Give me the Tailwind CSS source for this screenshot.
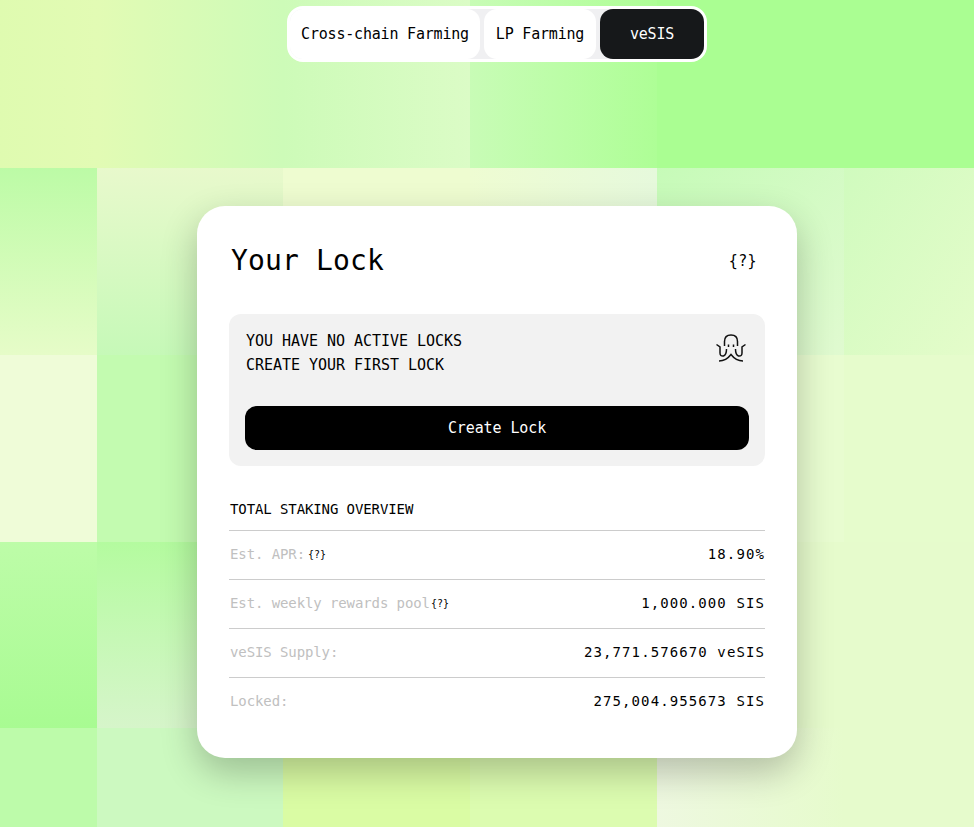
<!DOCTYPE html>
<html lang="en">
<head>
  <meta charset="UTF-8" />
  <title>Your Lock</title>
  <meta name="viewport" content="width=device-width, initial-scale=1.0" />
  <script src="https://cdn.jsdelivr.net/npm/@tailwindcss/browser@4"></script>
</head>
<body class="relative h-[827px] overflow-hidden bg-[#e6fbcc] font-['DejaVu_Sans_Mono',monospace] text-black">

  <!-- background mosaic -->
  <div class="absolute inset-0 grid grid-cols-[97px_186px_187px_187px_187px_130px] grid-rows-[168px_187px_187px_186px_99px]">
    <div class="bg-linear-to-r from-[#dffbb0] to-[#e2fbb4]"></div>
    <div class="bg-linear-to-r from-[#e2fbb4] to-[#cdfbb8]"></div>
    <div class="bg-linear-to-r from-[#cdfbb8] to-[#dbfcc6]"></div>
    <div class="bg-linear-to-r from-[#c8fcb6] to-[#aefe96]"></div>
    <div class="bg-[#aafe92]"></div>
    <div class="bg-[#aafe92]"></div>

    <div class="bg-linear-to-b from-[#bcfba6] to-[#e6fcc8]"></div>
    <div class="bg-linear-to-b from-[#e8f9cc] to-[#c6f9b8]"></div>
    <div class="bg-[#eefcd0]"></div>
    <div class="bg-linear-to-r from-[#eefcd2] to-[#e6f9dc]"></div>
    <div class="bg-linear-to-br from-[#c6fbb8] to-[#e0fad0]"></div>
    <div class="bg-linear-to-br from-[#d0fbbe] to-[#e4fcca]"></div>

    <div class="bg-[#effcd8]"></div>
    <div class="bg-[#c3fbb0]"></div>
    <div class="bg-[#e8f8d0]"></div>
    <div class="bg-[#e8f8d0]"></div>
    <div class="bg-[#e8fcd0]"></div>
    <div class="bg-[#e6fccc]"></div>

    <div class="bg-linear-to-b from-[#bdfca8] to-[#a8fb92]"></div>
    <div class="bg-linear-to-b from-[#b4fb9f] to-[#d6f5ca]"></div>
    <div class="bg-[#d0f5b0]"></div>
    <div class="bg-[#d0f5b0]"></div>
    <div class="bg-[#e6fbcc]"></div>
    <div class="bg-[#e6fbcc]"></div>

    <div class="bg-[#bdfbaa]"></div>
    <div class="bg-[#ccf9c0]"></div>
    <div class="bg-[#dafca4]"></div>
    <div class="bg-[#dcfcb0]"></div>
    <div class="bg-linear-to-r from-[#eef8e0] to-[#e6fbcc]"></div>
    <div class="bg-[#e6fbcc]"></div>
  </div>

  <main class="relative flex flex-col items-center pl-5">
    <!-- tabs -->
    <nav class="mt-[6px] flex h-14 gap-1 rounded-[16px] border-[3px] border-white bg-[#f0f0f2] text-[15px] tracking-[-0.2px]">
      <a class="flex w-[190px] items-center justify-center rounded-[13px] bg-white">Cross-chain Farming</a>
      <a class="flex w-[112px] items-center justify-center rounded-[13px] bg-white">LP Farming</a>
      <a class="flex w-[104px] items-center justify-center rounded-[13px] bg-[#16181a] text-white">veSIS</a>
    </nav>

    <!-- lock card -->
    <section class="mt-[144px] h-[552px] w-[600px] rounded-[28px] bg-white px-8 shadow-[0_14px_36px_rgba(0,0,0,0.24)]">
      <div class="flex h-[108px] items-center justify-between pr-2 pl-0.5 pt-0.5">
        <h1 class="text-[28px] leading-none tracking-[0.15px]">Your Lock</h1>
        <span class="text-[15px] tracking-[0.4px]">{?}</span>
      </div>

      <div class="h-[152px] rounded-xl bg-[#f2f2f2] px-4 pt-[15px]">
        <div class="flex justify-between">
          <p class="pl-px text-[15px] leading-6 tracking-[-0.03px]">YOU HAVE NO ACTIVE LOCKS<br />CREATE YOUR FIRST LOCK</p>
          <svg class="mt-[5px] mr-[3px]" width="30" height="28" viewBox="0 0 30 28" fill="none" stroke="#111" stroke-width="1.5">
            <path d="M8.5 12V7.5Q8.5 1 15 1Q21.5 1 21.5 7.5V12" />
            <path d="M12.5 10.5V13M17.5 10.5V13" />
            <path d="M0.5 10.5L4 13V19Q4 22.5 7.5 22Q10.5 21 10.5 15" />
            <path d="M29.5 10.5L26 13V19Q26 22.5 22.5 22Q19.5 21 19.5 15" />
            <path d="M3 27Q10 27 15 20.5Q20 27 27 27" />
          </svg>
        </div>
        <button class="mt-[29px] h-11 w-full rounded-xl bg-black text-[15px] tracking-[-0.1px] text-white">Create Lock</button>
      </div>

      <h2 class="flex h-[65px] items-end border-b border-[#cccccc] pb-[10px] pl-px text-[14px] tracking-[-0.1px]">TOTAL STAKING OVERVIEW</h2>

      <div class="flex h-[49px] items-center justify-between border-b border-[#cccccc] pb-0.5">
        <span class="flex items-center pl-px text-[14px] tracking-[-0.1px] text-[#c0c0c0]">Est. APR:<span class="ml-[3px] text-[10px] tracking-normal text-black">{?}</span></span>
        <span class="text-[14px] tracking-[1.1px]">18.90%</span>
      </div>
      <div class="flex h-[49px] items-center justify-between border-b border-[#cccccc] pb-0.5">
        <span class="flex items-center pl-px text-[14px] tracking-[-0.1px] text-[#c0c0c0]">Est. weekly rewards pool<span class="ml-px text-[10px] tracking-normal text-black">{?}</span></span>
        <span class="text-[14px] tracking-[1.1px]">1,000.000 SIS</span>
      </div>
      <div class="flex h-[49px] items-center justify-between border-b border-[#cccccc] pb-0.5">
        <span class="pl-px text-[14px] tracking-[-0.1px] text-[#c0c0c0]">veSIS Supply:</span>
        <span class="text-[14px] tracking-[1.1px]">23,771.576670 veSIS</span>
      </div>
      <div class="flex h-[49px] items-center justify-between pb-0.5">
        <span class="pl-px text-[14px] tracking-[-0.1px] text-[#c0c0c0]">Locked:</span>
        <span class="text-[14px] tracking-[1.1px]">275,004.955673 SIS</span>
      </div>
    </section>
  </main>

</body>
</html>
